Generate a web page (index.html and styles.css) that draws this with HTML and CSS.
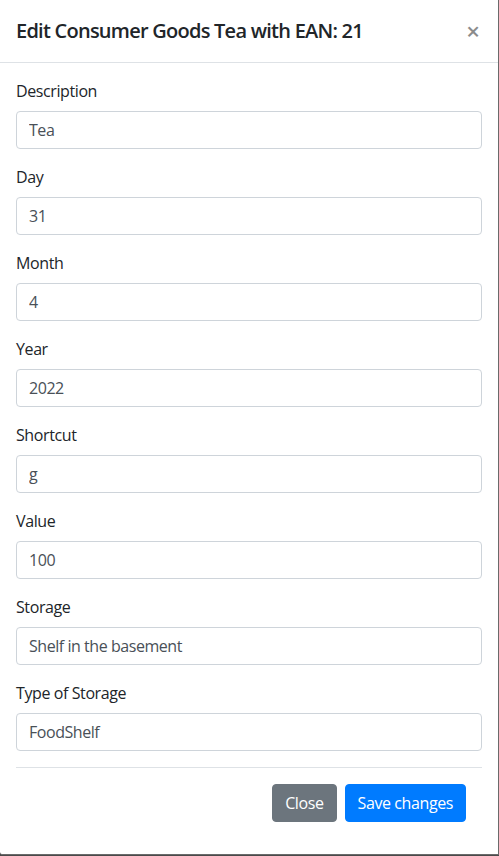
FILE: index.html
```html
<!DOCTYPE html>
<html lang="en">
<head>
<meta charset="utf-8">
<title>Edit Consumer Goods</title>
<link rel="stylesheet" href="styles.css">
</head>
<body>
<div class="modal-content">
  <div class="modal-header">
    <h5 class="modal-title">Edit Consumer Goods Tea with EAN: 21</h5>
    <button type="button" class="close" aria-label="Close">&times;</button>
  </div>
  <form class="modal-body">
    <div class="form-group">
      <label>Description</label>
      <input class="form-control" type="text" value="Tea">
    </div>
    <div class="form-group">
      <label>Day</label>
      <input class="form-control" type="text" value="31">
    </div>
    <div class="form-group">
      <label>Month</label>
      <input class="form-control" type="text" value="4">
    </div>
    <div class="form-group">
      <label>Year</label>
      <input class="form-control" type="text" value="2022">
    </div>
    <div class="form-group">
      <label>Shortcut</label>
      <input class="form-control" type="text" value="g">
    </div>
    <div class="form-group">
      <label>Value</label>
      <input class="form-control" type="text" value="100">
    </div>
    <div class="form-group">
      <label>Storage</label>
      <input class="form-control" type="text" value="Shelf in the basement">
    </div>
    <div class="form-group">
      <label>Type of Storage</label>
      <input class="form-control" type="text" value="FoodShelf">
    </div>
    <div class="modal-footer">
      <button type="button" class="btn btn-secondary">Close</button>
      <button type="button" class="btn btn-primary">Save changes</button>
    </div>
  </form>
</div>
</body>
</html>
```
FILE: styles.css
```css
* { box-sizing: border-box; }
html, body {
  margin: 0;
  padding: 0;
  background: #4a4a4a;
  font-family: "Open Sans", "Noto Sans", sans-serif;
  color: #212529;
  font-size: 16px;
  line-height: 1.5;
}
.modal-content {
  width: 499px;
  height: 855px;
  background: #fff;
  border-right: 1px solid #6a6a6a;
  border-bottom: 1px solid #6a6a6a;
  border-bottom-left-radius: 3px;
  display: flex;
  flex-direction: column;
}
.modal-header {
  display: flex;
  align-items: flex-start;
  justify-content: space-between;
  padding: 16px;
  border-bottom: 1px solid #dee2e6;
}
.modal-title {
  margin: 0;
  font-size: 20px;
  font-weight: 600;
  line-height: 30px;
  letter-spacing: -0.75px;
}
.close {
  background: none;
  border: 0;
  padding: 16px 18px 16px 16px;
  margin: -16px -16px -16px auto;
  font-family: "Open Sans", sans-serif;
  font-size: 24px;
  font-weight: 600;
  line-height: 30px;
  color: #000;
  opacity: .45;
  cursor: pointer;
}
.modal-body {
  padding: 16px;
  margin: 0;
}
.form-group {
  margin-bottom: 16px;
}
label {
  display: inline-block;
  margin-bottom: 8px;
  line-height: 24px;
  letter-spacing: -0.4px;
}
.form-control {
  display: block;
  width: 100%;
  height: 38px;
  padding: 6px 12px;
  font-family: inherit;
  font-size: 16px;
  line-height: 24px;
  color: #495057;
  background: #fff;
  border: 1px solid #ced4da;
  border-radius: 4px;
  letter-spacing: -0.45px;
}
.modal-footer {
  display: flex;
  justify-content: flex-end;
  align-items: center;
  padding: 12px;
  border-top: 1px solid #dee2e6;
}
.btn {
  margin: 4px;
  height: 38px;
  padding: 6px 12px;
  font-family: inherit;
  font-size: 16px;
  line-height: 24px;
  border: 1px solid transparent;
  border-radius: 4px;
  color: #fff;
  letter-spacing: -0.4px;
  cursor: pointer;
}
.btn-secondary { background: #6c757d; border-color: #6c757d; }
.btn-primary { background: #007bff; border-color: #007bff; }
```
